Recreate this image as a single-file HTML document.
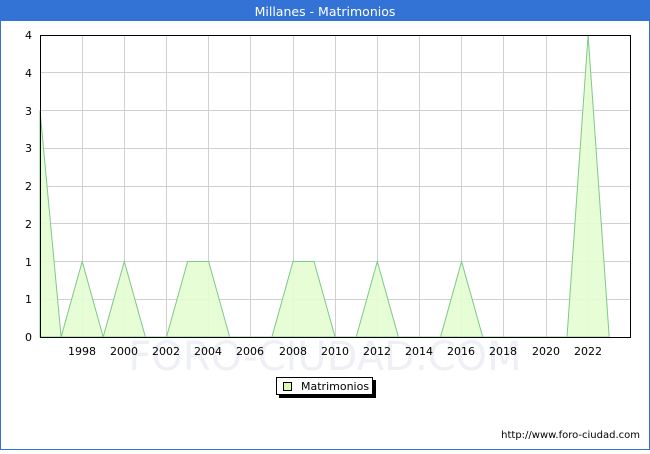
<!DOCTYPE html>
<html><head><meta charset="utf-8"><style>
body{margin:0;width:650px;height:450px;overflow:hidden;background:#fff;font-family:"DejaVu Sans","Liberation Sans",sans-serif}
</style></head><body>
<svg width="650" height="450" xmlns="http://www.w3.org/2000/svg" font-family="DejaVu Sans, Liberation Sans, sans-serif">
<rect x="0" y="0" width="650" height="450" fill="#fff"/>
<rect x="0.5" y="0.5" width="649" height="449" fill="none" stroke="#3473d6" stroke-width="1"/>
<rect x="0" y="0" width="650" height="21" fill="#3473d6"/>
<text x="325" y="16" font-size="12.5" fill="#fff" text-anchor="middle">Millanes - Matrimonios</text>
<g stroke="#d0d0d0" stroke-width="1">
<line x1="40" y1="72.5" x2="630" y2="72.5"/><line x1="40" y1="110.5" x2="630" y2="110.5"/><line x1="40" y1="148.5" x2="630" y2="148.5"/><line x1="40" y1="186.5" x2="630" y2="186.5"/><line x1="40" y1="223.5" x2="630" y2="223.5"/><line x1="40" y1="261.5" x2="630" y2="261.5"/><line x1="40" y1="299.5" x2="630" y2="299.5"/>
<line x1="82.5" y1="35" x2="82.5" y2="337"/><line x1="124.5" y1="35" x2="124.5" y2="337"/><line x1="166.5" y1="35" x2="166.5" y2="337"/><line x1="208.5" y1="35" x2="208.5" y2="337"/><line x1="250.5" y1="35" x2="250.5" y2="337"/><line x1="293.5" y1="35" x2="293.5" y2="337"/><line x1="335.5" y1="35" x2="335.5" y2="337"/><line x1="377.5" y1="35" x2="377.5" y2="337"/><line x1="419.5" y1="35" x2="419.5" y2="337"/><line x1="461.5" y1="35" x2="461.5" y2="337"/><line x1="503.5" y1="35" x2="503.5" y2="337"/><line x1="546.5" y1="35" x2="546.5" y2="337"/><line x1="588.5" y1="35" x2="588.5" y2="337"/>
</g>
<text x="325" y="370" font-size="40" fill="#eef0f6" text-anchor="middle">FORO-CIUDAD.COM</text>
<polygon fill="#e4fdd0" fill-opacity="0.9" stroke="#7ec88a" stroke-width="1" points="40,337 40,110.5 61.1,337 82.2,261.5 103.2,337 124.3,261.5 145.4,337 166.5,337 187.6,261.5 208.6,261.5 229.7,337 250.8,337 271.9,337 293,261.5 314,261.5 335.1,337 356.2,337 377.3,261.5 398.4,337 419.4,337 440.5,337 461.6,261.5 482.7,337 503.8,337 524.8,337 545.9,337 567,337 588.1,35 609.2,337"/>
<rect x="40.5" y="35.5" width="590" height="302" fill="none" stroke="#000" stroke-width="1"/>
<g font-size="11" fill="#000" text-anchor="end">
<text x="32" y="39">4</text><text x="32" y="77">4</text><text x="32" y="115">3</text><text x="32" y="152">3</text><text x="32" y="190">2</text><text x="32" y="228">2</text><text x="32" y="266">1</text><text x="32" y="303">1</text><text x="32" y="341">0</text>
</g>
<g font-size="11" fill="#000" text-anchor="middle">
<text x="82" y="355">1998</text><text x="124" y="355">2000</text><text x="166" y="355">2002</text><text x="208" y="355">2004</text><text x="250" y="355">2006</text><text x="293" y="355">2008</text><text x="335" y="355">2010</text><text x="377" y="355">2012</text><text x="419" y="355">2014</text><text x="461" y="355">2016</text><text x="503" y="355">2018</text><text x="546" y="355">2020</text><text x="588" y="355">2022</text>
</g>
<rect x="279" y="380" width="97" height="18" fill="#000"/>
<rect x="276.5" y="377.5" width="96" height="17" fill="#fff" stroke="#000" stroke-width="1"/>
<rect x="283.5" y="382.5" width="8" height="8" fill="#d8fbb0" stroke="#000" stroke-width="1"/>
<text x="301" y="390" font-size="11" fill="#000">Matrimonios</text>
<text x="640" y="438" font-size="10" fill="#000" text-anchor="end">http://www.foro-ciudad.com</text>
</svg>
</body></html>
